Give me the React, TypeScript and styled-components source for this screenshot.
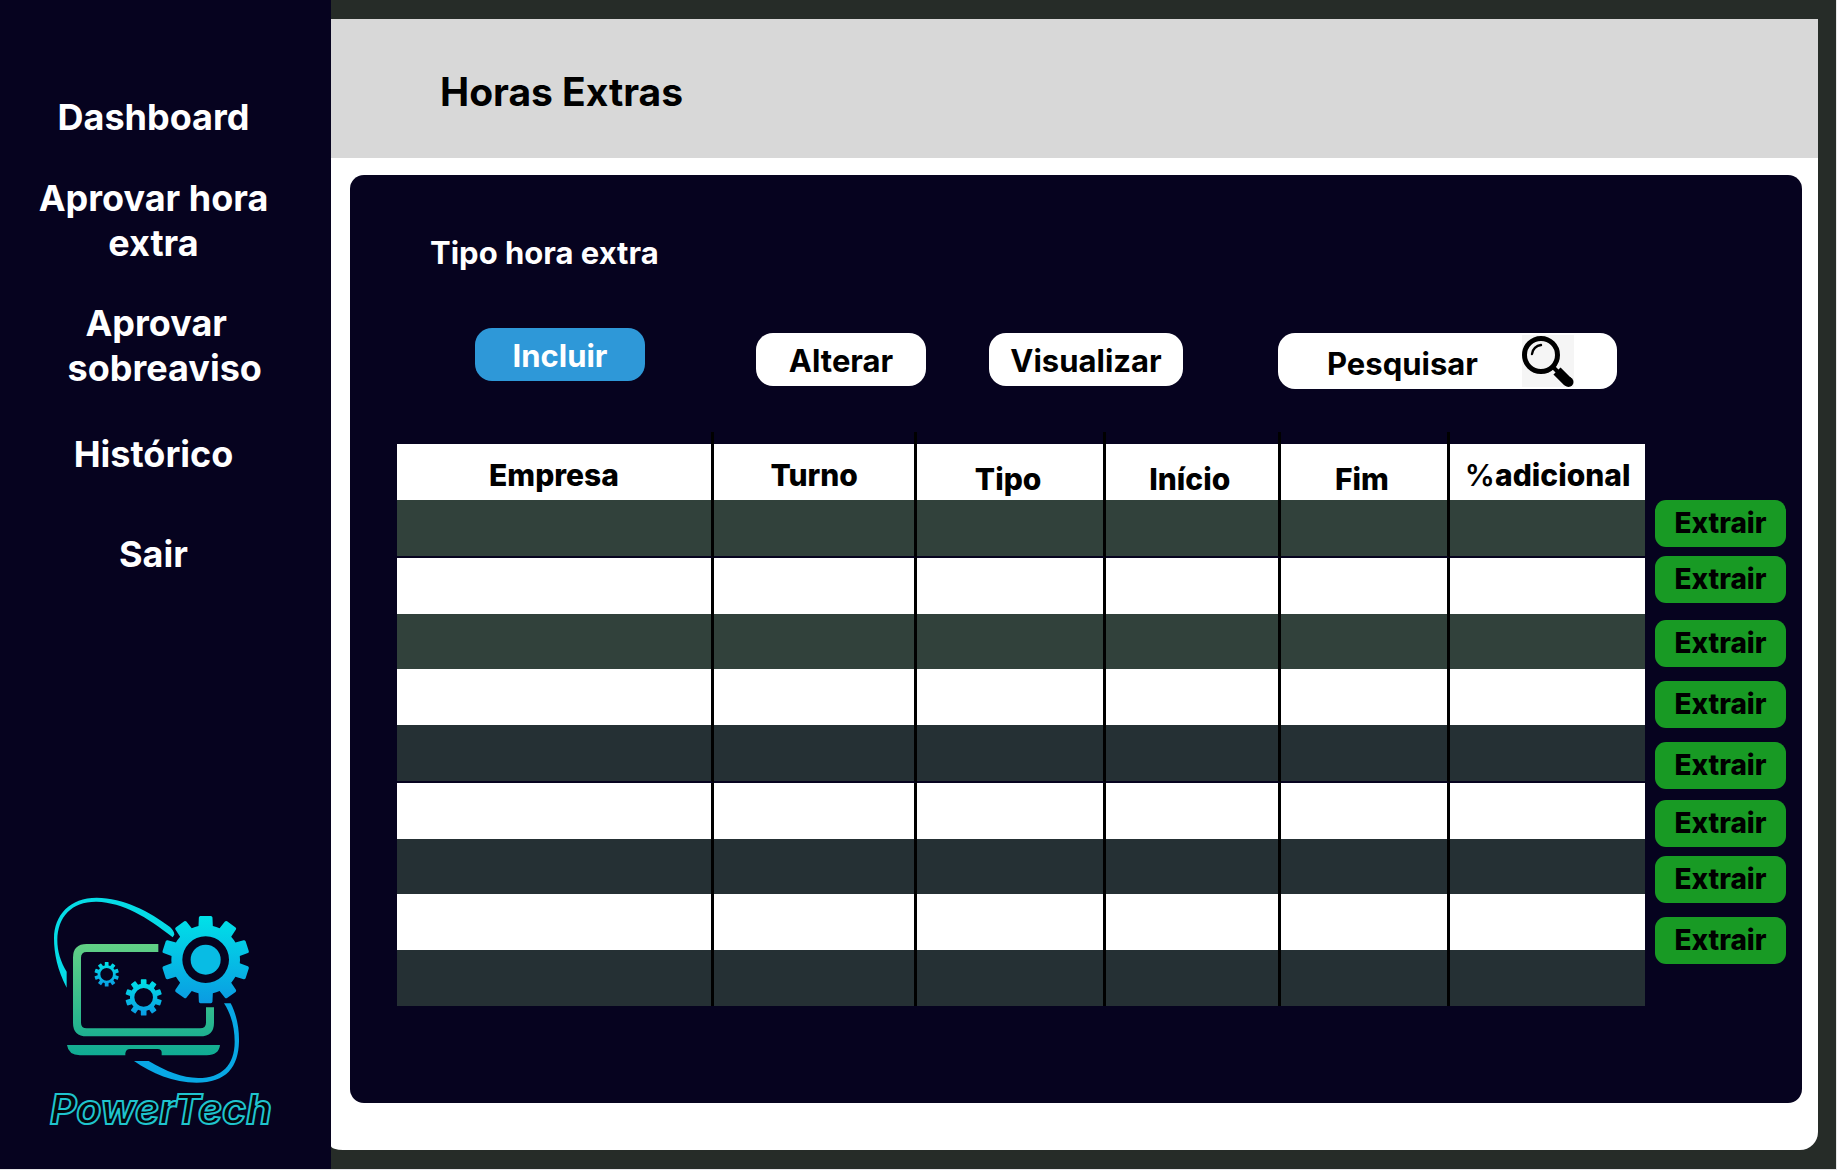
import React from "react";
import styled, { createGlobalStyle } from "styled-components";

const color = {
  navy: "#06031f",
  frame: "#262c28",
  header: "#d8d8d8",
  green: "#189a24",
  blue: "#2e98d8",
  moss: "#31413b",
  slate: "#253034",
};

const GlobalStyle = createGlobalStyle`
  *, *::before, *::after { box-sizing: border-box; }
  body {
    margin: 0;
    background: #e6e6e8;
    font-family: Inter, "Liberation Sans", sans-serif;
    font-weight: 700;
  }
  button, input { font: inherit; }
`;

const Page = styled.div`
  display: flex;
  min-height: 100vh;
  padding: 0 1px 1px 0;
`;

const Sidebar = styled.aside`
  flex: 0 0 331px;
  display: flex;
  flex-direction: column;
  padding: 95px 0 36px;
  background: ${color.navy};
`;

const Nav = styled.nav`
  display: flex;
  flex-direction: column;
  align-items: center;
  width: 307px;
`;

const NavLink = styled.a<{ $gap: number; $indent?: boolean }>`
  margin-bottom: ${(p) => p.$gap}px;
  padding-left: ${(p) => (p.$indent ? 14 : 0)}px;
  color: #fff;
  font-size: 36px;
  line-height: 45px;
  text-align: center;
  text-decoration: none;
  white-space: pre;
`;

const Brand = styled.div`
  display: flex;
  flex-direction: column;
  margin: auto 0 0 50px;
`;

const BrandName = styled.span`
  color: #04060a;
  font-size: 41px;
  font-style: italic;
  line-height: 48px;
  white-space: nowrap;
  -webkit-text-stroke: 2px #1fc4ce;
`;

const Frame = styled.div`
  flex: 1;
  min-width: 0;
  display: flex;
  padding: 19px 18px 19px 0;
  background: ${color.frame};
`;

const Main = styled.main`
  flex: 1;
  min-width: 0;
  display: flex;
  flex-direction: column;
  background: #fff;
  border-radius: 0 0 18px 12px / 0 0 18px 4px;
`;

const Header = styled.header`
  display: flex;
  align-items: center;
  min-height: 139px;
  padding: 6px 109px 0;
  background: ${color.header};
`;

const Title = styled.h1`
  margin: 0;
  color: #000;
  font-size: 39px;
  line-height: 48px;
`;

const Panel = styled.section`
  flex: 1;
  display: flex;
  flex-direction: column;
  margin: 17px 16px 47px 19px;
  padding: 59px 16px 97px 47px;
  background: ${color.navy};
  border-radius: 14px;
`;

const Subtitle = styled.h2`
  margin: 0 0 56px 33px;
  color: #fff;
  font-size: 31px;
  line-height: 38px;
`;

const Toolbar = styled.div`
  display: flex;
  align-items: flex-start;
  gap: 111px;
  margin: 0 0 55px 78px;
`;

const ToolGroup = styled.div`
  display: flex;
  align-items: flex-start;
  padding-top: 5px;
`;

const ToolButton = styled.button<{ $primary?: boolean; $wide?: boolean }>`
  width: ${(p) => (p.$wide ? 194 : 170)}px;
  height: 53px;
  margin: 0 ${(p) => (p.$wide ? 95 : p.$primary ? 0 : 63)}px 0 0;
  padding: 2px 0 0;
  border: 0;
  border-radius: 17px;
  background: ${(p) => (p.$primary ? color.blue : "#fff")};
  color: ${(p) => (p.$primary ? "#fff" : "#000")};
  font-size: 31px;
  line-height: 38px;
`;

const Search = styled.form`
  display: flex;
  align-items: center;
  width: 339px;
  height: 56px;
  padding: 0 43px 0 49px;
  border-radius: 17px;
  background: #fff;
`;

const SearchInput = styled.input`
  flex: 1;
  min-width: 0;
  padding: 5px 0 0;
  border: 0;
  outline: 0;
  background: transparent;
  color: #000;
  font-size: 31px;
  line-height: 38px;
  &::placeholder {
    color: #000;
    opacity: 1;
  }
`;

const IconButton = styled.button`
  display: flex;
  padding: 0;
  border: 0;
  background: #f5f5f5;
`;

const Records = styled.div`
  display: flex;
  align-items: flex-start;
  gap: 10px;
`;

const Table = styled.table`
  flex: 1;
  min-width: 0;
  table-layout: fixed;
  border-collapse: separate;
  border-spacing: 0;
`;

const Col = styled.col<{ $share: number }>`
  width: ${(p) => p.$share}%;
`;

const HeadCell = styled.th<{ $low?: boolean }>`
  position: relative;
  height: 56px;
  padding: ${(p) => (p.$low ? "14px 4px 0 0" : "6px 0 0")};
  border-right: 3px solid #000;
  background: #fff;
  color: #000;
  font-size: 30px;
  font-weight: 800;
  line-height: 38px;
  &::before {
    content: "";
    position: absolute;
    right: -3px;
    top: -12px;
    width: 3px;
    height: 12px;
    background: #000;
  }
  &:last-child {
    border-right: 0;
  }
  &:last-child::before {
    display: none;
  }
`;

const Percent = styled.span`
  font-weight: 600;
`;

const Row = styled.tr<{ $fill: string; $height: number; $split?: boolean }>`
  height: ${(p) => p.$height}px;
  td {
    padding: 0;
    border-right: 3px solid #000;
    border-bottom: ${(p) => (p.$split ? 2 : 0)}px solid ${color.navy};
    background: ${(p) => p.$fill};
  }
  td:last-child {
    border-right: 0;
  }
`;

const Actions = styled.div`
  flex: 0 0 131px;
  display: flex;
  flex-direction: column;
  padding-top: 56px;
`;

const ExtractButton = styled.button<{ $gap: number }>`
  height: 47px;
  margin: 0 0 ${(p) => p.$gap}px;
  padding: 0 0 2px;
  border: 0;
  border-radius: 11px;
  background: ${color.green};
  color: #000;
  font-size: 28px;
  font-weight: 800;
  line-height: 38px;
`;

function gear(cx: number, cy: number, outer: number, body: number, hole: number, teeth = 10) {
  const step = (Math.PI * 2) / teeth;
  const at = (r: number, a: number) =>
    `${(cx + r * Math.cos(a)).toFixed(1)} ${(cy + r * Math.sin(a)).toFixed(1)}`;
  let d = "";
  for (let i = 0; i < teeth; i++) {
    const a = -Math.PI / 2 + i * step;
    d += `${i ? "L" : "M"}${at(body, a - 0.21)}L${at(outer * 0.97, a - 0.16)}`;
    d += `Q${at(outer, a - 0.15)} ${at(outer, a - 0.12)}`;
    d += `L${at(outer, a + 0.12)}Q${at(outer, a + 0.15)} ${at(outer * 0.97, a + 0.16)}`;
    d += `L${at(body, a + 0.21)}`;
    d += `A${body} ${body} 0 0 1 ${at(body, a + step - 0.21)}`;
  }
  return `${d}ZM${cx - hole} ${cy}a${hole} ${hole} 0 1 0 ${hole * 2} 0a${hole} ${hole} 0 1 0 ${-hole * 2} 0Z`;
}

function LogoMark() {
  return (
    <svg width="203" height="190" viewBox="150 105 609 570" aria-hidden="true">
      <defs>
        <linearGradient id="gearFill" x1="0" y1="0" x2="0" y2="1">
          <stop offset="0" stopColor="#00e2e8" />
          <stop offset="1" stopColor="#0a9be2" />
        </linearGradient>
        <linearGradient id="laptopFill" gradientUnits="userSpaceOnUse" x1="0" y1="252" x2="0" y2="586">
          <stop offset="0" stopColor="#62d085" />
          <stop offset="1" stopColor="#0fab93" />
        </linearGradient>
      </defs>
      <path
        fill="#06dce6"
        d="M200 383C172 330 162 280 162 235C162 165 210 113 290 113C370 113 450 155 510 201Q523 213 523 224L518 232C440 170 370 128 290 125C215 124 173 170 172 240C172 275 182 305 200 335Z"
      />
      <path
        fill="#08a8e4"
        d="M672 430L692 430C708 460 718 500 717 545C715 620 680 668 590 668C520 668 455 640 402 603L446 603C500 635 545 653 595 654C665 654 704 615 704 545C704 505 695 465 672 430Z"
      />
      <path
        fill="none"
        stroke="url(#laptopFill)"
        strokeWidth="24"
        d="M475 264H260Q231 264 231 293V488Q231 517 260 517H600Q630 517 630 488V442"
      />
      <path
        fill="url(#laptopFill)"
        d="M201 555H660Q657 585 620 586H485V578Q485 567 473 567H390Q378 567 376 580V586H240Q205 585 201 555Z"
      />
      <path fill="url(#gearFill)" fillRule="evenodd" d={gear(617, 299, 132, 103, 70)} />
      <circle cx="617" cy="299" r="45" fill="#08bce4" />
      <path fill="url(#gearFill)" fillRule="evenodd" d={gear(320, 343, 37, 27, 19)} />
      <path fill="url(#gearFill)" fillRule="evenodd" d={gear(431, 412, 55, 41, 28)} />
    </svg>
  );
}

function Magnifier() {
  return (
    <svg width="52" height="52" viewBox="0 0 52 52" fill="none" stroke="#000" aria-hidden="true">
      <circle cx="19" cy="20" r="16.5" strokeWidth="5" />
      <path d="M10 19A10 10 0 0 1 19 10" strokeWidth="2.4" strokeLinecap="round" />
      <path d="M30 31L36 37" strokeWidth="4" />
      <path d="M35 36L46 47" strokeWidth="10" />
      <circle cx="46.500" cy="47" r="5" fill="#000" stroke="none" />
    </svg>
  );
}

const links = [
  { label: "Dashboard", gap: 36 },
  { label: "Aprovar hora\nextra", gap: 35 },
  { label: "Aprovar \n sobreaviso", gap: 41, indent: true },
  { label: "Histórico", gap: 55 },
  { label: "Sair", gap: 0 },
];

const columns = [
  { name: "Empresa", share: 25.4 },
  { name: "Turno", share: 16.3 },
  { name: "Tipo", share: 15.1, low: true },
  { name: "Início", share: 14, low: true },
  { name: "Fim", share: 13.6, low: true },
  { name: "adicional", share: 15.6, percent: true },
];

const rows = [
  { fill: color.moss, height: 58, split: true },
  { fill: "#fff", height: 56 },
  { fill: color.moss, height: 55 },
  { fill: "#fff", height: 56 },
  { fill: color.slate, height: 58, split: true },
  { fill: "#fff", height: 56 },
  { fill: color.slate, height: 55 },
  { fill: "#fff", height: 56 },
  { fill: color.slate, height: 56 },
];

const extractGaps = [9, 17, 14, 14, 11, 9, 14, 0];

export default function App() {
  return (
    <>
      <GlobalStyle />
      <Page>
        <Sidebar>
          <Nav>
            {links.map((l) => (
              <NavLink key={l.label} href="#" $gap={l.gap} $indent={l.indent}>
                {l.label}
              </NavLink>
            ))}
          </Nav>
          <Brand>
            <LogoMark />
            <BrandName>PowerTech</BrandName>
          </Brand>
        </Sidebar>
        <Frame>
          <Main>
            <Header>
              <Title>Horas Extras</Title>
            </Header>
            <Panel>
              <Subtitle>Tipo hora extra</Subtitle>
              <Toolbar>
                <ToolButton type="button" $primary>Incluir</ToolButton>
                <ToolGroup>
                  <ToolButton type="button">Alterar</ToolButton>
                  <ToolButton type="button" $wide>Visualizar</ToolButton>
                  <Search onSubmit={(e) => e.preventDefault()}>
                    <SearchInput type="text" placeholder="Pesquisar" aria-label="Pesquisar" />
                    <IconButton type="submit" aria-label="Pesquisar">
                      <Magnifier />
                    </IconButton>
                  </Search>
                </ToolGroup>
              </Toolbar>
              <Records>
                <Table>
                  <colgroup>
                    {columns.map((c) => (
                      <Col key={c.name} $share={c.share} />
                    ))}
                  </colgroup>
                  <thead>
                    <tr>
                      {columns.map((c) => (
                        <HeadCell key={c.name} scope="col" $low={c.low}>
                          {c.percent && <Percent>%</Percent>}
                          {c.name}
                        </HeadCell>
                      ))}
                    </tr>
                  </thead>
                  <tbody>
                    {rows.map((r, i) => (
                      <Row key={i} $fill={r.fill} $height={r.height} $split={r.split}>
                        {columns.map((c) => (
                          <td key={c.name} />
                        ))}
                      </Row>
                    ))}
                  </tbody>
                </Table>
                <Actions>
                  {extractGaps.map((gap, i) => (
                    <ExtractButton key={i} type="button" $gap={gap}>
                      Extrair
                    </ExtractButton>
                  ))}
                </Actions>
              </Records>
            </Panel>
          </Main>
        </Frame>
      </Page>
    </>
  );
}
